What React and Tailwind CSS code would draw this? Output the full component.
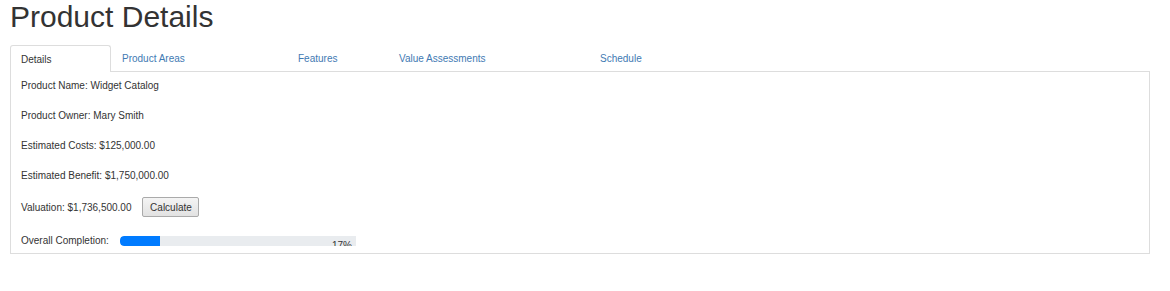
import React from "react";

// Tabs for the product page - widths taken from the layout
const TABS = [
  { label: "Details", width: "w-[101px]", active: true },
  { label: "Product Areas", width: "w-[176px]" },
  { label: "Features", width: "w-[101px]" },
  { label: "Value Assessments", width: "w-[201px]" },
  { label: "Schedule", width: "w-[120px]" },
];

const FIELDS = [
  "Product Name: Widget Catalog",
  "Product Owner: Mary Smith",
  "Estimated Costs: $125,000.00",
  "Estimated Benefit: $1,750,000.00",
];

export default function App() {
  const completion = 17;

  return (
    <div
      className="w-[1170px] h-[291px] bg-white text-[#333] pl-[10px] pr-[20px]"
      style={{ fontFamily: '"Liberation Sans", Arial, sans-serif' }}
    >
      <h1 className="text-[30px] leading-[34px] font-normal m-0">
        Product Details
      </h1>

      {/* Tabs */}
      <div className="flex mt-[11px] h-[26px] text-[10px]">
        {TABS.map((t) =>
          t.active ? (
            <div
              key={t.label}
              className={`${t.width} shrink-0 h-[27px] bg-white border border-b-0 border-[#ddd] rounded-t-[3px] pl-[10px] pt-[7px] leading-[13px] text-[#333] relative z-10`}
            >
              {t.label}
            </div>
          ) : (
            <div
              key={t.label}
              className={`${t.width} shrink-0 pl-[11px] pt-[7px] leading-[13px] text-[#3f7ab3]`}
            >
              {t.label}
            </div>
          )
        )}
      </div>

      {/* Panel */}
      <div className="border border-[#ddd] h-[183px] pl-[10px] pt-[7px] text-[10px] overflow-hidden">
        {FIELDS.map((f) => (
          <p key={f} className="leading-[13px] mb-[17px]">
            {f}
          </p>
        ))}

        <div className="flex items-center mt-[-2px] h-[20px]">
          <span className="leading-[13px]">Valuation: $1,736,500.00</span>
          <button className="ml-[11px] h-[20px] w-[57px] border border-[#aaa] rounded-[2px] bg-gradient-to-b from-[#f4f4f4] to-[#e2e2e2] text-[10px] text-[#333] leading-[13px]">
            Calculate
          </button>
        </div>

        <div className="flex items-start mt-[17px]">
          <span className="leading-[13px] w-[99px] shrink-0">
            Overall Completion:
          </span>
          <div className="relative mt-[1.5px] w-[236px] h-[10px] bg-[#e9ecef] rounded-l-[4px] overflow-hidden">
            <div
              className="h-full bg-[#007bff] rounded-l-[4px]"
              style={{ width: `${completion}%` }}
            />
            <span className="absolute right-[4px] top-[4px] text-[10px] leading-[12px] text-[#333]">
              {completion}%
            </span>
          </div>
        </div>
      </div>
    </div>
  );
}
